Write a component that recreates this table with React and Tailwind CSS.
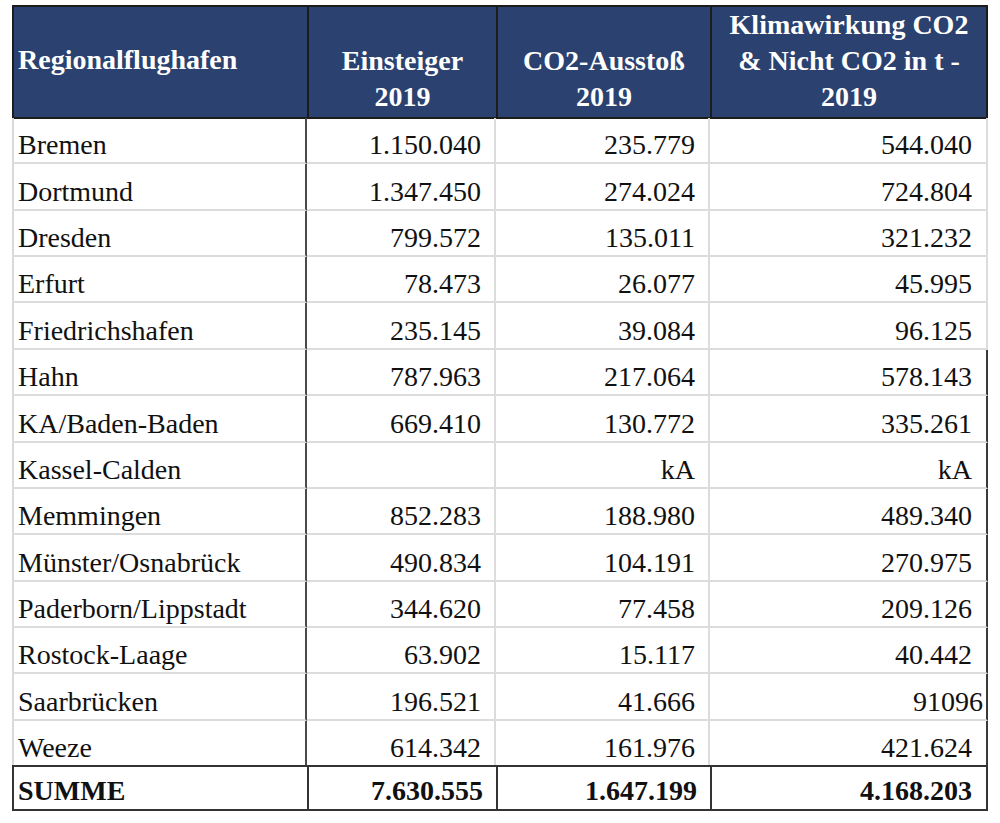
const rows = [
  ["Bremen", "1.150.040", "235.779", "544.040"],
  ["Dortmund", "1.347.450", "274.024", "724.804"],
  ["Dresden", "799.572", "135.011", "321.232"],
  ["Erfurt", "78.473", "26.077", "45.995"],
  ["Friedrichshafen", "235.145", "39.084", "96.125"],
  ["Hahn", "787.963", "217.064", "578.143"],
  ["KA/Baden-Baden", "669.410", "130.772", "335.261"],
  ["Kassel-Calden", "", "kA", "kA"],
  ["Memmingen", "852.283", "188.980", "489.340"],
  ["Münster/Osnabrück", "490.834", "104.191", "270.975"],
  ["Paderborn/Lippstadt", "344.620", "77.458", "209.126"],
  ["Rostock-Laage", "63.902", "15.117", "40.442"],
  ["Saarbrücken", "196.521", "41.666", "91096"],
  ["Weeze", "614.342", "161.976", "421.624"],
]

export default function App() {
  return (
    <div className="min-h-screen bg-white pt-[5px] pl-[12px] font-['Liberation_Serif','Times_New_Roman',serif]">
      <div className="w-[976px] text-[28px] text-[#111]">
        {/* Kopfzeile */}
        <div className="grid grid-cols-[295px_189px_214px_278px] h-[113px] bg-[#2b416f] font-bold text-white leading-[36px]">
          <div className="flex items-center border-2 border-r-0 border-[#1c1c1c] pl-[4px] pb-[4px]">
            Regionalflughafen
          </div>
          <div className="flex items-end justify-center text-center border-2 border-r-0 border-[#1c1c1c] pb-[2px]">
            <span>Einsteiger<br />2019</span>
          </div>
          <div className="flex items-end justify-center text-center border-2 border-r-0 border-[#1c1c1c] pb-[2px]">
            <span>CO2-Ausstoß<br />2019</span>
          </div>
          <div className="flex items-end justify-center text-center border-2 border-[#1c1c1c] pb-[2px] whitespace-nowrap">
            <span>Klimawirkung CO2<br />&amp; Nicht CO2 in t -<br />2019</span>
          </div>
        </div>

        {/* Datenzeilen */}
        {rows.map((r, i) => (
          <div key={r[0]} className="grid grid-cols-[295px_189px_214px_278px] h-[46.36px] leading-[28px]">
            <div className="flex items-end border-l-2 border-b-2 border-l-[#d9d9d9] border-b-[#dcdcdc] border-r-2 border-r-[#4a4a4a] pl-[4px] pb-[3px]">
              {r[0]}
            </div>
            <div className="flex items-end justify-end border-r-2 border-b-2 border-[#dcdcdc] pr-[13px] pb-[3px]">
              {r[1]}
            </div>
            <div className="flex items-end justify-end border-r-2 border-b-2 border-[#dcdcdc] pr-[13px] pb-[3px]">
              {r[2]}
            </div>
            <div
              className={
                "flex items-end justify-end border-b-2 border-b-[#dcdcdc] border-r-2 pb-[3px] " +
                (i >= 5 ? "border-r-[#3a3a3a] " : "border-r-[#dcdcdc] ") +
                (r[3] === "91096" ? "pr-[3px]" : "pr-[14px]")
              }
            >
              {r[3]}
            </div>
          </div>
        ))}

        {/* Summe */}
        <div className="grid grid-cols-[295px_189px_214px_278px] h-[46px] leading-[28px] font-bold -mt-[2px]">
          <div className="flex items-end border-2 border-r-0 border-[#333] pl-[4px] pb-[4px]">SUMME</div>
          <div className="flex items-end justify-end border-2 border-r-0 border-[#333] pr-[13px] pb-[4px]">7.630.555</div>
          <div className="flex items-end justify-end border-2 border-r-0 border-[#333] pr-[13px] pb-[4px]">1.647.199</div>
          <div className="flex items-end justify-end border-2 border-[#333] pr-[14px] pb-[4px]">4.168.203</div>
        </div>
      </div>
    </div>
  )
}
